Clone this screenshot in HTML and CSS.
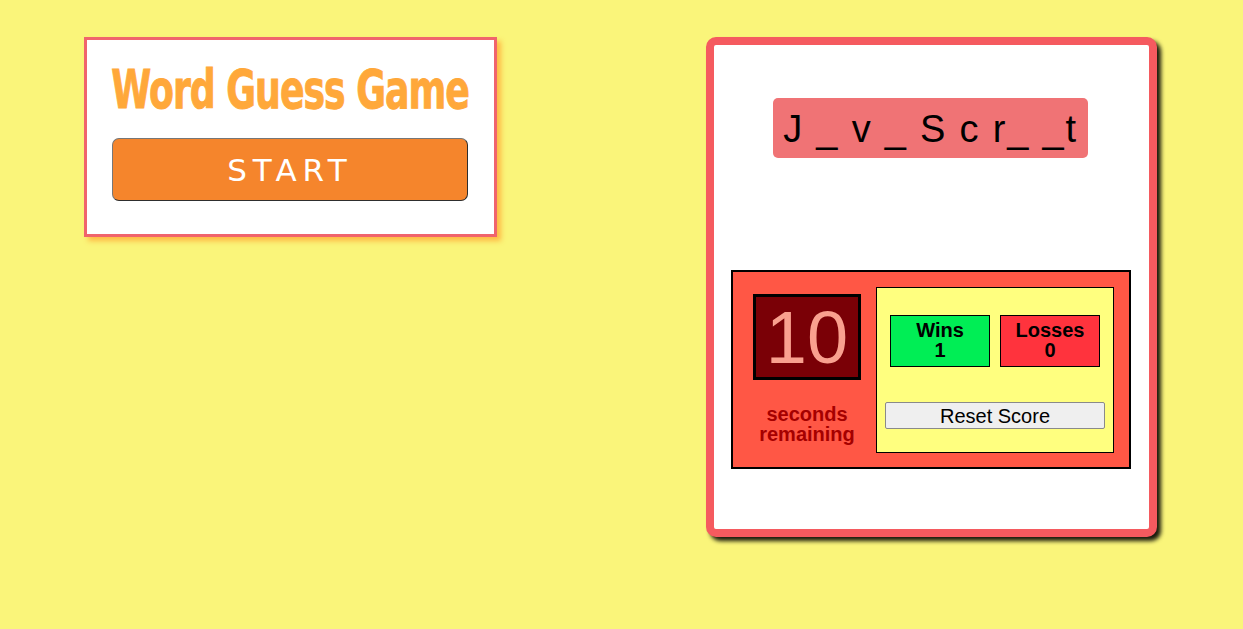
FILE: index.html
```html
<!DOCTYPE html>
<html lang="en">
<head>
<meta charset="utf-8">
<title>Word Guess Game</title>
<link rel="stylesheet" href="styles.css">
</head>
<body>
<div class="page">
  <div class="intro">
    <h1 class="title"><span class="title-text">Word Guess Game</span></h1>
    <button class="start">START</button>
  </div>
  <div class="game">
    <div class="word-row">
      <div class="word">J _ v _ S c r_ _t</div>
    </div>
    <div class="score-panel">
      <div class="timer-col">
        <div class="timer">10</div>
        <div class="timer-label">seconds<br>remaining</div>
      </div>
      <div class="tally">
        <div class="tally-row">
          <div class="stat wins">Wins<br>1</div>
          <div class="stat losses">Losses<br>0</div>
        </div>
        <button class="reset">Reset Score</button>
      </div>
    </div>
  </div>
</div>
</body>
</html>
```
FILE: styles.css
```css
* { box-sizing: border-box; }
html, body { margin: 0; padding: 0; }
body {
  background: #faf57a;
  font-family: "Liberation Sans", Arial, sans-serif;
  width: 1243px;
  height: 629px;
  overflow: hidden;
}
.page {
  display: flex;
  align-items: flex-start;
  padding: 37px 0 0 84px;
}
.intro {
  width: 413px;
  height: 200px;
  background: #fff;
  border: 3px solid #f0646c;
  box-shadow: 4px 4px 5px rgba(255, 176, 60, 0.85);
  padding: 0 26px 0 25px;
}
.title {
  margin: 22px 0 0 0;
  height: 56px;
  display: flex;
  justify-content: center;
  font-family: "DejaVu Sans", sans-serif;
  font-weight: bold;
  font-size: 53px;
  line-height: 56px;
  color: #ffa83a;
  white-space: nowrap;
}
.title-text {
  display: inline-block;
  letter-spacing: -1.5px;
  transform: scaleX(0.685);
  transform-origin: center;
  -webkit-text-stroke: 1px #ffa83a;
}
.start {
  display: block;
  margin: 20px 0 0 0;
  width: 356px;
  height: 63px;
  background: #f5852c;
  border: 1px solid #2e2e2e;
  border-top-color: #777;
  border-left-color: #777;
  border-radius: 7px;
  color: #fff;
  font-family: "DejaVu Sans", sans-serif;
  font-size: 31px;
  letter-spacing: 6px;
  padding: 0 2px 0 2px;
  line-height: 60px;
}
.game {
  margin-left: 209px;
  width: 451px;
  height: 500px;
  background: #fff;
  border: 8px solid #f55a5f;
  border-radius: 10px;
  box-shadow: 4px 4px 4px rgba(0, 0, 0, 0.9);
  padding: 53px 18px 0 17px;
}
.word-row {
  display: flex;
  justify-content: center;
  padding-right: 1px;
}
.word {
  width: 315px;
  height: 60px;
  background: #f07375;
  border-radius: 5px;
  font-size: 38px;
  line-height: 62px;
  text-align: center;
  color: #000;
  letter-spacing: 1.8px;
  white-space: pre;
}
.score-panel {
  margin-top: 112px;
  width: 400px;
  height: 199px;
  background: #ff5745;
  border: 2px solid #000;
  display: flex;
  padding: 15px 15px 14px 20px;
}
.timer-col {
  width: 108px;
  display: flex;
  flex-direction: column;
  align-items: center;
  padding-top: 7px;
}
.timer {
  width: 108px;
  height: 86px;
  background: #7a0006;
  border: 3px solid #000;
  color: #f9a08f;
  font-size: 74px;
  line-height: 82px;
  text-align: center;
}
.timer-label {
  margin-top: 24px;
  font-weight: bold;
  font-size: 20px;
  line-height: 20px;
  color: #a50000;
  text-align: center;
  white-space: nowrap;
}
.tally {
  margin-left: 15px;
  width: 238px;
  height: 166px;
  background: #ffff7f;
  border: 1px solid #000;
  padding: 27px 8px 0 8px;
}
.tally-row {
  display: flex;
  gap: 10px;
  padding: 0 5px;
}
.stat {
  width: 100px;
  height: 52px;
  border: 1px solid #000;
  font-weight: bold;
  font-size: 20px;
  line-height: 20px;
  text-align: center;
  padding-top: 4px;
  color: #000;
}
.wins { background: #00ee55; }
.losses { background: #ff333d; }
.reset {
  display: block;
  margin-top: 35px;
  width: 220px;
  height: 27px;
  background: #efefef;
  border: 1px solid #8a8a8a;
  border-radius: 2px;
  font-family: "Liberation Sans", Arial, sans-serif;
  font-size: 20px;
  color: #000;
  padding: 0;
  line-height: 24px;
}
```
